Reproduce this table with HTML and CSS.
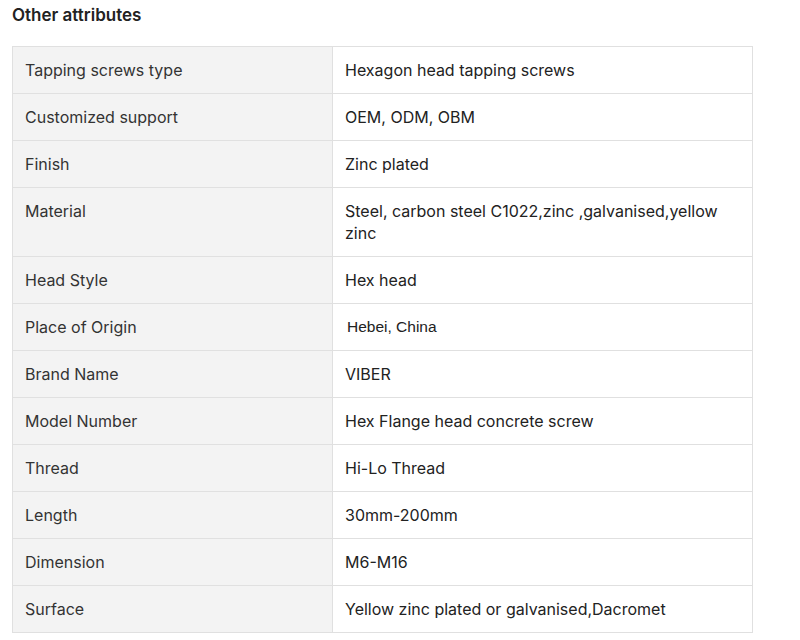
FILE: index.html
```html
<!DOCTYPE html>
<html>
<head>
<meta charset="utf-8">
<link rel="stylesheet" href="styles.css">
</head>
<body>
<div class="wrap">
  <h2 class="title">Other attributes</h2>
  <table class="attrs">
    <tr><td class="k">Tapping screws type</td><td class="v">Hexagon head tapping screws</td></tr>
    <tr><td class="k">Customized support</td><td class="v">OEM, ODM, OBM</td></tr>
    <tr><td class="k">Finish</td><td class="v">Zinc plated</td></tr>
    <tr><td class="k">Material</td><td class="v">Steel, carbon steel C1022,zinc ,galvanised,yellow zinc</td></tr>
    <tr><td class="k">Head Style</td><td class="v">Hex head</td></tr>
    <tr><td class="k">Place of Origin</td><td class="v"><span class="alt">Hebei, China</span></td></tr>
    <tr><td class="k">Brand Name</td><td class="v">VIBER</td></tr>
    <tr><td class="k">Model Number</td><td class="v">Hex Flange head concrete screw</td></tr>
    <tr><td class="k">Thread</td><td class="v">Hi-Lo Thread</td></tr>
    <tr><td class="k">Length</td><td class="v">30mm-200mm</td></tr>
    <tr><td class="k">Dimension</td><td class="v">M6-M16</td></tr>
    <tr><td class="k">Surface</td><td class="v">Yellow zinc plated or galvanised,Dacromet</td></tr>
  </table>
</div>
</body>
</html>
```
FILE: styles.css
```css
html, body {
  margin: 0;
  padding: 0;
  background: #fff;
}
body {
  font-family: Inter, "Noto Sans", sans-serif;
  color: #222;
}
.wrap {
  padding: 4px 12px 0 12px;
}
.title {
  margin: 0 0 20px 0;
  font-size: 17px;
  line-height: 22px;
  font-weight: 600;
  color: #222;
}
.attrs {
  border-collapse: collapse;
  width: 741px;
  table-layout: fixed;
}
.attrs td {
  border: 1px solid #e0e0e0;
  padding: 12px 12px;
  font-size: 16px;
  line-height: 22px;
  height: 22px;
  vertical-align: top;
}
.attrs td.k {
  width: 295px;
  background: #f3f3f3;
  color: #333;
}
.attrs td.v {
  color: #222;
}
.alt {
  display: inline-block;
  vertical-align: top;
  font-family: "Liberation Sans", Arial, sans-serif;
  font-size: 15.5px;
  line-height: 22px;
  padding-left: 2px;
}
```
